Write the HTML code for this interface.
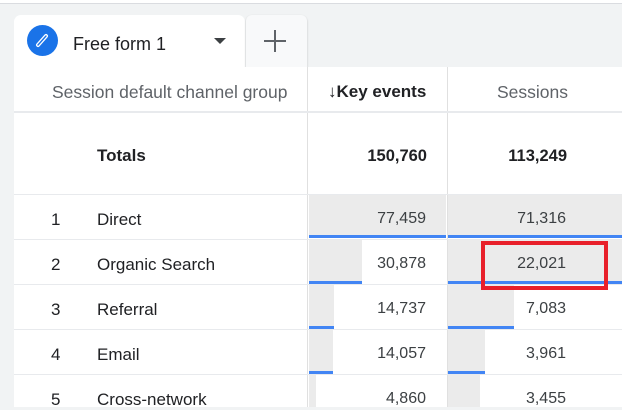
<!DOCTYPE html><html><head><style>
body{margin:0;width:622px;height:407px;overflow:hidden;background:#f1f3f4;font-family:"Liberation Sans",Arial,sans-serif;position:relative}
.a{position:absolute}
.t{font-size:17px;color:#202124}
.n{font-size:16px;color:#3c4043;text-align:right}
</style></head><body>
<div class="a" style="left:0;top:0;width:622px;height:3px;background:#fff"></div>
<div class="a" style="left:0;top:3px;width:622px;height:1px;background:#dadce0"></div>
<div class="a" style="left:14px;top:15px;width:231px;height:60px;background:#fff;border-radius:7px 7px 0 0"></div>
<div class="a" style="left:246px;top:15px;width:61px;height:52px;background:#f8f9fa;border-radius:6px 6px 0 0;box-shadow:0 1px 2px rgba(0,0,0,.2)"></div>
<div class="a" style="left:264px;top:40px;width:22px;height:2px;background:#5f6368"></div>
<div class="a" style="left:274px;top:30px;width:2px;height:22px;background:#5f6368"></div>
<div class="a" style="left:27px;top:25px;width:31px;height:31px;border-radius:50%;background:#1a73e8"></div>
<svg class="a" style="left:33px;top:31px" width="19" height="19" viewBox="0 0 19 19"><path d="M5 14 L13 5" stroke="#fff" stroke-width="4" stroke-linecap="round"/><path d="M5 14 L13 5" stroke="#1a73e8" stroke-width="1.4" stroke-linecap="round"/></svg>
<div class="a t" style="left:73px;top:34px;font-size:18px">Free form 1</div>
<div class="a" style="left:214px;top:38px;border-left:6px solid transparent;border-right:6px solid transparent;border-top:6px solid #3c4043"></div>
<div class="a" style="left:14px;top:67px;width:608px;height:340px;background:#fff"></div>
<div class="a" style="left:307px;top:67px;width:1px;height:340px;background:#e0e0e0"></div>
<div class="a" style="left:447px;top:67px;width:1px;height:340px;background:#e0e0e0"></div>
<div class="a" style="left:14px;top:111px;width:608px;height:2px;background:#e8eaed"></div>
<div class="a" style="left:52px;top:82px;font-size:17.5px;color:#5f6368">Session default channel group</div>
<div class="a" style="left:328px;top:82px;font-size:17px;color:#202124;font-weight:bold">↓Key events</div>
<div class="a" style="left:497px;top:82px;font-size:17.5px;color:#5f6368">Sessions</div>
<div class="a" style="left:97px;top:146px;font-size:17px;font-weight:bold;color:#202124">Totals</div>
<div class="a" style="left:326px;width:101px;text-align:right;top:147px;font-size:16.5px;font-weight:bold;color:#202124">150,760</div>
<div class="a" style="left:466px;width:101px;text-align:right;top:147px;font-size:16.5px;font-weight:bold;color:#202124">113,249</div>
<div class="a" style="left:14px;top:194px;width:608px;height:1px;background:#e8eaed"></div>
<div class="a" style="left:14px;top:239px;width:608px;height:1px;background:#e8eaed"></div>
<div class="a" style="left:14px;top:284px;width:608px;height:1px;background:#e8eaed"></div>
<div class="a" style="left:14px;top:329px;width:608px;height:1px;background:#e8eaed"></div>
<div class="a" style="left:14px;top:374px;width:608px;height:1px;background:#e8eaed"></div>
<div class="a" style="left:309px;top:195px;width:137px;height:43px;background:#ebebeb;border-bottom:3px solid #4285f4;box-sizing:border-box"></div>
<div class="a" style="left:309px;top:240px;width:53px;height:44px;background:#ebebeb;border-bottom:3px solid #4285f4;box-sizing:border-box"></div>
<div class="a" style="left:309px;top:285px;width:25px;height:44px;background:#ebebeb;border-bottom:3px solid #4285f4;box-sizing:border-box"></div>
<div class="a" style="left:309px;top:330px;width:24px;height:44px;background:#ebebeb;border-bottom:3px solid #4285f4;box-sizing:border-box"></div>
<div class="a" style="left:309px;top:375px;width:7px;height:32px;background:#ebebeb"></div>
<div class="a" style="left:448px;top:195px;width:174px;height:43px;background:#ebebeb;border-bottom:3px solid #4285f4;box-sizing:border-box"></div>
<div class="a" style="left:448px;top:240px;width:174px;height:44px;background:#ebebeb;border-bottom:3px solid #4285f4;box-sizing:border-box"></div>
<div class="a" style="left:448px;top:285px;width:66px;height:44px;background:#ebebeb;border-bottom:3px solid #4285f4;box-sizing:border-box"></div>
<div class="a" style="left:448px;top:330px;width:37px;height:44px;background:#ebebeb;border-bottom:3px solid #4285f4;box-sizing:border-box"></div>
<div class="a" style="left:448px;top:375px;width:32px;height:32px;background:#ebebeb"></div>
<div class="a" style="left:481px;top:241px;width:127px;height:49px;border:4px solid #e8202a;box-sizing:border-box"></div>
<div class="a t" style="left:51px;top:210px">1</div><div class="a t" style="left:97px;top:210px">Direct</div>
<div class="a t" style="left:51px;top:255px">2</div><div class="a t" style="left:97px;top:255px">Organic Search</div>
<div class="a t" style="left:51px;top:300px">3</div><div class="a t" style="left:97px;top:300px">Referral</div>
<div class="a t" style="left:51px;top:345px">4</div><div class="a t" style="left:97px;top:345px">Email</div>
<div class="a t" style="left:51px;top:390px">5</div><div class="a t" style="left:97px;top:390px">Cross-network</div>
<div class="a n" style="left:326px;width:100px;top:210px">77,459</div><div class="a n" style="left:466px;width:100px;top:210px">71,316</div>
<div class="a n" style="left:326px;width:100px;top:255px">30,878</div><div class="a n" style="left:466px;width:100px;top:255px">22,021</div>
<div class="a n" style="left:326px;width:100px;top:300px">14,737</div><div class="a n" style="left:466px;width:100px;top:300px">7,083</div>
<div class="a n" style="left:326px;width:100px;top:345px">14,057</div><div class="a n" style="left:466px;width:100px;top:345px">3,961</div>
<div class="a n" style="left:326px;width:100px;top:390px">4,860</div><div class="a n" style="left:466px;width:100px;top:390px">3,455</div>
</body></html>
